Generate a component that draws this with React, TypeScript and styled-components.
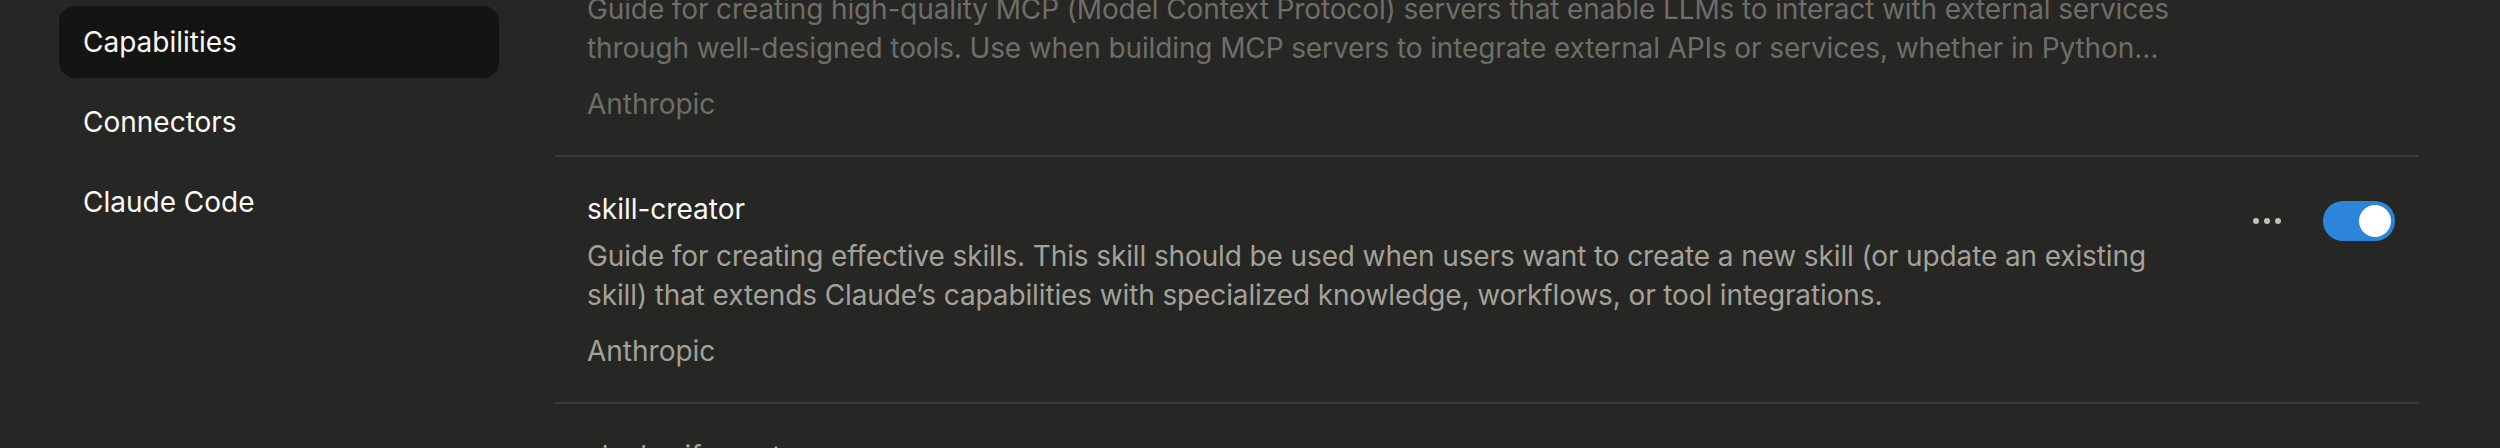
import React from "react";
import styled, { createGlobalStyle } from "styled-components";

const GlobalStyle = createGlobalStyle`
  html, body {
    margin: 0;
    padding: 0;
    background: #262624;
  }
  body {
    font-family: Inter, "Liberation Sans", sans-serif;
    color: #faf9f5;
    -webkit-font-smoothing: antialiased;
  }
  #root {
    height: 448px;
    overflow: hidden;
  }
`;

const Page = styled.div`
  display: flex;
  align-items: flex-start;
  gap: 56px;
  padding-left: 59px;
  height: 448px;
  overflow: hidden;
`;

const Sidebar = styled.nav`
  width: 440px;
  flex: none;
  display: flex;
  flex-direction: column;
  gap: 8px;
  padding-top: 6px;
`;

const NavItem = styled.a<{ $active?: boolean }>`
  display: flex;
  align-items: center;
  height: 72px;
  padding: 0 24px;
  border-radius: 16px;
  font-size: 28px;
  color: #faf9f5;
  text-decoration: none;
  background: ${(p) => (p.$active ? "#141413" : "transparent")};
`;

const Main = styled.main`
  width: 1864px;
  flex: none;
`;

// list is scrolled, first row is partly above the fold
const SkillList = styled.div`
  margin-top: -90px;
`;

const SkillRow = styled.div`
  display: flex;
  align-items: flex-start;
  gap: 40px;
  padding: 33px 24px 31px 32px;
  border-bottom: 2px solid #3b3b38;
`;

const SkillText = styled.div<{ $dimmed?: boolean }>`
  flex: 1;
  min-width: 0;
  font-size: 28px;
  line-height: 39px;
  opacity: ${(p) => (p.$dimmed ? 0.58 : 1)};
`;

const SkillName = styled.div`
  color: #faf9f5;
`;

const SkillDesc = styled.div`
  margin-top: 8px;
  color: #a3a199;
  letter-spacing: -0.12px;
  display: -webkit-box;
  -webkit-box-orient: vertical;
  -webkit-line-clamp: 2;
  overflow: hidden;
`;

const SkillAuthor = styled.div`
  margin-top: 17px;
  color: #a3a199;
`;

const Actions = styled.div`
  flex: none;
  display: flex;
  align-items: center;
  gap: 36px;
  margin-top: 11px;
`;

const MoreButton = styled.button`
  width: 40px;
  height: 40px;
  padding: 0;
  border: none;
  background: transparent;
  display: flex;
  align-items: center;
  justify-content: center;
  gap: 5px;
  cursor: pointer;
`;

const Dot = styled.span`
  width: 6px;
  height: 6px;
  border-radius: 50%;
  background: #c2c0b6;
`;

const Toggle = styled.button<{ $on?: boolean }>`
  width: 72px;
  height: 40px;
  padding: 4px;
  border: none;
  border-radius: 20px;
  display: flex;
  justify-content: ${(p) => (p.$on ? "flex-end" : "flex-start")};
  background: ${(p) => (p.$on ? "#2c84db" : "#4a4945")};
  cursor: pointer;
`;

const Knob = styled.span`
  width: 32px;
  height: 32px;
  border-radius: 50%;
  background: #ffffff;
`;

type Skill = {
  name: string;
  description: string;
  author: string;
  enabled: boolean;
};

const skills: Skill[] = [
  {
    name: "mcp-builder",
    description:
      "Guide for creating high-quality MCP (Model Context Protocol) servers that enable LLMs to interact with external services through well-designed tools. Use when building MCP servers to integrate external APIs or services, whether in Python (FastMCP) or Node/TypeScript (MCP SDK).",
    author: "Anthropic",
    enabled: false,
  },
  {
    name: "skill-creator",
    description:
      "Guide for creating effective skills. This skill should be used when users want to create a new skill (or update an existing skill) that extends Claude\u2019s capabilities with specialized knowledge, workflows, or tool integrations.",
    author: "Anthropic",
    enabled: true,
  },
  {
    name: "slack-gif-creator",
    description:
      "Toolkit for creating animated GIFs optimized for Slack, with validators for size constraints and composable animation primitives.",
    author: "Anthropic",
    enabled: false,
  },
];

const navItems = ["Capabilities", "Connectors", "Claude Code"];

export default function App() {
  return (
    <>
      <GlobalStyle />
      <Page>
        <Sidebar>
          {navItems.map((label) => (
            <NavItem key={label} $active={label === "Capabilities"}>
              {label}
            </NavItem>
          ))}
        </Sidebar>
        <Main>
          <SkillList>
            {skills.map((skill) => (
              <SkillRow key={skill.name}>
                <SkillText $dimmed={!skill.enabled}>
                  <SkillName>{skill.name}</SkillName>
                  <SkillDesc>{skill.description}</SkillDesc>
                  <SkillAuthor>{skill.author}</SkillAuthor>
                </SkillText>
                <Actions>
                  <MoreButton aria-label="More options">
                    <Dot />
                    <Dot />
                    <Dot />
                  </MoreButton>
                  <Toggle $on={skill.enabled} aria-label="Toggle skill">
                    <Knob />
                  </Toggle>
                </Actions>
              </SkillRow>
            ))}
          </SkillList>
        </Main>
      </Page>
    </>
  );
}
